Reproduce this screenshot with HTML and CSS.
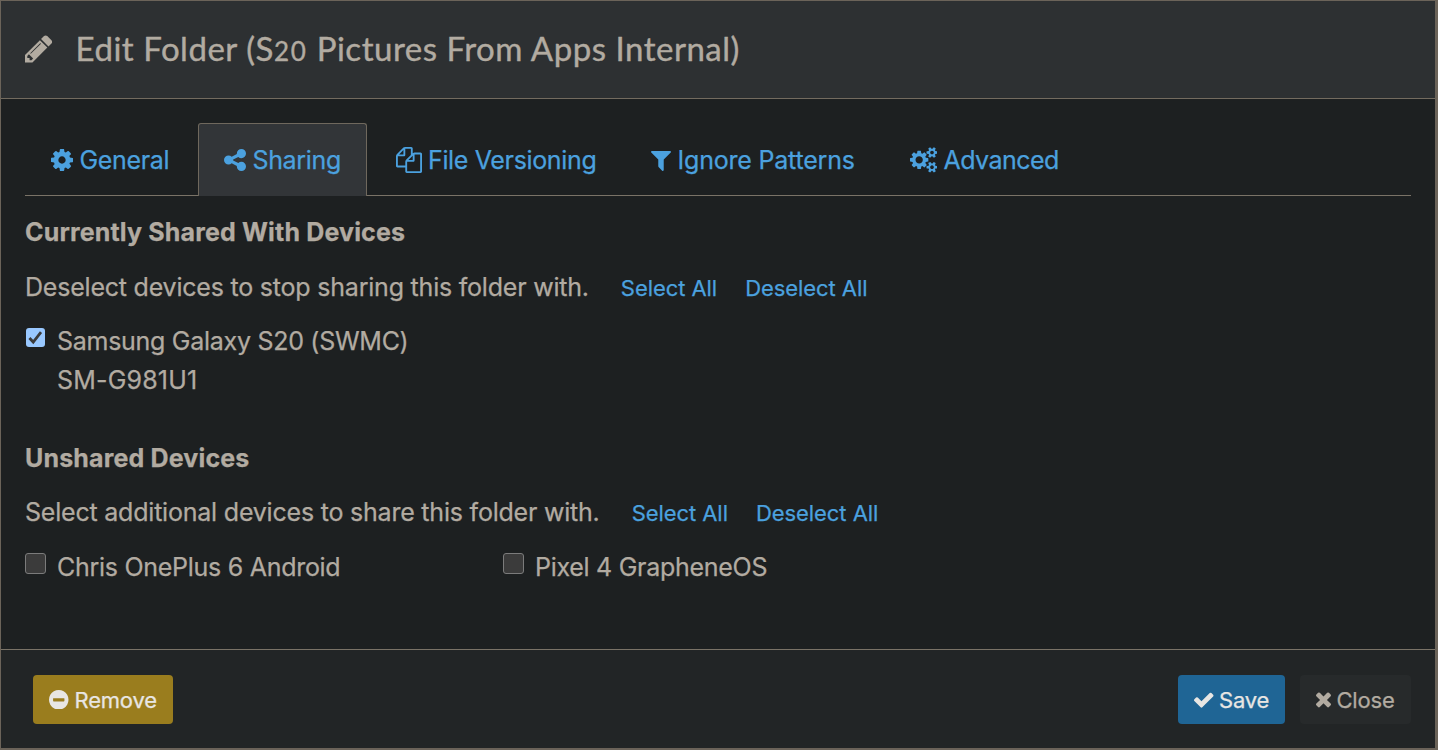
FILE: index.html
```html
<!DOCTYPE html>
<html lang="en">
<head>
<meta charset="utf-8">
<title>Edit Folder</title>
<link rel="stylesheet" href="styles.css">
</head>
<body>
<div class="modal">
  <header class="modal-header">
    <svg class="icon icon-pencil" viewBox="128 128 1536 1536"><path d="M491 1536l91-91-235-235-91 91v107h128v128h107zm523-928q0-22-22-22-10 0-17 7l-542 542q-7 7-7 17 0 22 22 22 10 0 17-7l542-542q7-7 7-17zm-54-192l416 416-832 832h-416v-416zm683 96q0 53-37 90l-166 166-416-416 166-165q36-38 90-38 53 0 91 38l235 234q37 39 37 91z"/></svg>
    <h1 class="title">Edit Folder (S<span class="oldstyle">20</span> Pictures From Apps Internal)</h1>
  </header>

  <main class="modal-body">
    <nav class="tabs">
      <a class="tab tab-general"><svg class="icon icon-square" viewBox="128 128 1536 1536"><path d="M1152 896q0-106-75-181t-181-75-181 75-75 181 75 181 181 75 181-75 75-181zm512-109v222q0 12-8 23t-20 13l-185 28q-19 54-39 91 35 50 107 138 10 12 10 25t-9 23q-27 37-99 108t-94 71q-12 0-26-9l-138-108q-44 23-91 38-16 136-29 186-7 28-36 28h-222q-14 0-24.5-8.5t-11.5-21.5l-28-184q-49-16-90-37l-141 107q-10 9-25 9-14 0-25-11-126-114-165-168-7-10-7-23 0-12 8-23 15-21 51-66.5t54-70.5q-27-50-41-99l-183-27q-13-2-21-12.5t-8-23.5v-222q0-12 8-23t19-13l186-28q14-46 39-92-40-57-107-138-10-12-10-24 0-10 9-23 26-36 98.5-107.5t94.5-71.5q13 0 26 10l138 107q44-23 91-38 16-136 29-186 7-28 36-28h222q14 0 24.5 8.5t11.5 21.5l28 184q49 16 90 37l142-107q9-9 24-9 13 0 25 10 129 119 165 170 7 8 7 22 0 12-8 23-15 21-51 66.5t-54 70.5q26 50 41 98l183 28q13 2 21 12.5t8 23.5z"/></svg><span>General</span></a>
      <a class="tab tab-sharing active"><svg class="icon icon-square" viewBox="128 128 1536 1536"><path d="M1344 1024q133 0 226.500 93.500t93.500 226.500-93.500 226.500-226.500 93.500-226.500-93.500-93.500-226.500q0-12 2-34l-360-180q-92 86-218 86-133 0-226.500-93.500t-93.500-226.500 93.500-226.500 226.500-93.500q126 0 218 86l360-180q-2-22-2-34 0-133 93.500-226.500t226.500-93.500 226.500 93.500 93.500 226.500-93.500 226.500-226.500 93.500q-126 0-218-86l-360 180q2 22 2 34t-2 34l360 180q92-86 218-86z"/></svg><span>Sharing</span></a>
      <a class="tab tab-versioning"><svg class="icon icon-files" viewBox="0 0 1792 1792"><path d="M1696 384q40 0 68 28t28 68v1216q0 40-28 68t-68 28h-960q-40 0-68-28t-28-68v-288h-544q-40 0-68-28t-28-68v-672q0-40 20-88t48-76l408-408q28-28 76-48t88-20h416q40 0 68 28t28 68v328q68-40 128-40h416zm-544 213l-299 299h299v-299zm-640-384l-299 299h299v-299zm196 647l316-316v-416h-384v416q0 40-28 68t-68 28h-416v640h512v-256q0-40 20-88t48-76zm956 804v-1152h-384v416q0 40-28 68t-68 28h-416v640h896z"/></svg><span>File Versioning</span></a>
      <a class="tab tab-ignore"><svg class="icon icon-filter" viewBox="192 128 1408 1536"><path d="M1595 295q17 41-14 70l-493 493v742q0 42-39 59-13 5-25 5-27 0-45-19l-256-256q-19-19-19-45v-486l-493-493q-31-29-14-70 17-39 59-39h1280q42 0 59 39z"/></svg><span>Ignore Patterns</span></a>
      <a class="tab tab-advanced"><svg class="icon icon-cogs" viewBox="-64 0 1920 1792"><path d="M832 896q0-106-75-181t-181-75-181 75-75 181 75 181 181 75 181-75 75-181zm768 512q0-52-38-90t-90-38-90 38-38 90q0 53 37.500 90.500t90.500 37.500 90.500-37.500 37.500-90.500zm0-1024q0-52-38-90t-90-38-90 38-38 90q0 53 37.500 90.500t90.500 37.500 90.500-37.500 37.500-90.500zm-384 421v185q0 10-7 19.500t-16 10.500l-155 24q-11 35-32 76 34 48 90 115 7 11 7 20 0 12-7 19-23 30-82.500 89.500t-78.500 59.500q-11 0-21-7l-115-90q-37 19-77 31-11 108-23 155-7 24-30 24h-186q-11 0-20-7.500t-10-17.500l-23-153q-34-10-75-31l-118 89q-7 7-20 7-11 0-21-8-144-133-144-160 0-9 7-19 10-14 41-53t47-61q-23-44-35-82l-152-24q-10-1-17-9.500t-7-19.500v-185q0-10 7-19.500t16-10.500l155-24q11-35 32-76-34-48-90-115-7-11-7-20 0-12 7-20 22-30 82-89t79-59q11 0 21 7l115 90q34-18 77-32 11-108 23-154 7-24 30-24h186q11 0 20 7.500t10 17.500l23 153q34 10 75 31l118-89q8-7 20-7 11 0 21 8 144 133 144 160 0 8-7 19-12 16-42 54t-45 60q23 48 34 82l152 23q10 2 17 10.500t7 19.500zm640 533v140q0 16-149 31-12 27-30 52 51 113 51 138 0 4-4 7-122 71-124 71-8 0-46-47t-52-68q-20 2-30 2t-30-2q-14 21-52 68t-46 47q-2 0-124-71-4-3-4-7 0-25 51-138-18-25-30-52-149-15-149-31v-140q0-16 149-31 13-29 30-52-51-113-51-138 0-4 4-7 4-2 35-20t59-34 30-16q8 0 46 46.500t52 67.500q20-2 30-2t30 2q51-71 92-112l6-2q4 0 124 70 4 3 4 7 0 25-51 138 17 23 30 52 149 15 149 31zm0-1024v140q0 16-149 31-12 27-30 52 51 113 51 138 0 4-4 7-122 71-124 71-8 0-46-47t-52-68q-20 2-30 2t-30-2q-14 21-52 68t-46 47q-2 0-124-71-4-3-4-7 0-25 51-138-18-25-30-52-149-15-149-31v-140q0-16 149-31 13-29 30-52-51-113-51-138 0-4 4-7 4-2 35-20t59-34 30-16q8 0 46 46.500t52 67.500q20-2 30-2t30 2q51-71 92-112l6-2q4 0 124 70 4 3 4 7 0 25-51 138 17 23 30 52 149 15 149 31z"/></svg><span>Advanced</span></a>
    </nav>

    <section class="group group-shared">
      <h2 class="group-title">Currently Shared With Devices</h2>
      <div class="hint"><span class="hint-text">Deselect devices to stop sharing this folder with.</span><a class="link">Select All</a><a class="link">Deselect All</a></div>
      <div class="devices">
        <label class="device"><span class="box checked"><svg viewBox="0 0 20 20"><path d="M3.600 10.600l4 4.200L15.800 4.400"/></svg></span><span class="name">Samsung Galaxy S20 (SWMC)<br><span class="model">SM-G981U1</span></span></label>
      </div>
    </section>

    <section class="group group-unshared">
      <h2 class="group-title">Unshared Devices</h2>
      <div class="hint"><span class="hint-text">Select additional devices to share this folder with.</span><a class="link">Select All</a><a class="link">Deselect All</a></div>
      <div class="devices">
        <label class="device"><span class="box"></span><span class="name">Chris OnePlus 6 Android</span></label>
        <label class="device"><span class="box"></span><span class="name">Pixel 4 GrapheneOS</span></label>
      </div>
    </section>
  </main>

  <footer class="modal-footer">
    <button class="btn btn-remove"><svg class="icon" viewBox="128 128 1536 1536"><path d="M1344 960v-128q0-26-19-45t-45-19h-768q-26 0-45 19t-19 45v128q0 26 19 45t45 19h768q26 0 45-19t19-45zm320-64q0 209-103 385.500t-279.500 279.500-385.500 103-385.500-103-279.500-279.500-103-385.500 103-385.500 279.500-279.500 385.500-103 385.500 103 279.500 279.500 103 385.500z"/></svg><span>Remove</span></button>
    <button class="btn btn-save"><svg class="icon" viewBox="121 128 1550 1536"><path d="M1671 566q0 40-28 68l-724 724-136 136q-28 28-68 28t-68-28l-136-136-362-362q-28-28-28-68t28-68l136-136q28-28 68-28t68 28l294 295 656-657q28-28 68-28t68 28l136 136q28 28 28 68z"/></svg><span>Save</span></button>
    <button class="btn btn-close"><svg class="icon" viewBox="302 180 1188 1536"><path d="M1490 1322q0 40-28 68l-136 136q-28 28-68 28t-68-28l-294-294-294 294q-28 28-68 28t-68-28l-136-136q-28-28-28-68t28-68l294-294-294-294q-28-28-28-68t28-68l136-136q28-28 68-28t68 28l294 294 294-294q28-28 68-28t68 28l136 136q28 28 28 68t-28 68l-294 294 294 294q28 28 28 68z"/></svg><span>Close</span></button>
  </footer>
</div>
</body>
</html>
```
FILE: styles.css
```css
* { box-sizing: border-box; }

body {
  margin: 0;
  background: #1e2122;
  color: #b2aba1;
  font-family: Inter, "Liberation Sans", sans-serif;
  font-size: 25px;
  -webkit-text-stroke: 0.250px currentColor;
}

.modal {
  display: flex;
  flex-direction: column;
  height: 750px;
  border: 1px solid #6b6359;
  border-right-width: 3px;
  border-bottom-width: 2px;
  background: #1d2021;
}

.icon { display: block; flex: none; fill: currentColor; }

.modal-header {
  display: flex;
  height: 98px;
  padding: 34px 24px 0;
  border-bottom: 1px solid #736b5f;
  background: #2d3032;
}
.icon-pencil { width: 27.500px; height: 27.500px; }
.title {
  margin: -7px 0 0 23px;
  font: 400 33px/40px Lato, sans-serif;
  letter-spacing: 0.520px;
  white-space: nowrap;
  -webkit-text-stroke-width: 0.400px;
}
.oldstyle { font-size: 26px; letter-spacing: 1.800px; }

.modal-body { flex: 1; padding: 24px 24px 0; }

.tabs {
  display: flex;
  gap: 3px;
  height: 73px;
  border-bottom: 1px solid #7a7367;
}
.tab {
  display: flex;
  align-items: center;
  height: 73px;
  padding: 0 0 0 25px;
  border: 1px solid transparent;
  border-bottom: 0;
  border-radius: 3px 3px 0 0;
  color: #4ba1df;
  letter-spacing: -0.350px;
  white-space: nowrap;
}
.tab.active { border-color: #6f685d; background: #323538; }
.icon-square { width: 22px; height: 22px; margin-right: 6.500px; }
.icon-files { width: 26px; height: 26px; margin-right: 6px; }
.icon-filter { width: 20px; height: 22px; margin-right: 6.500px; }
.icon-cogs { width: 27.500px; height: 25.700px; margin-right: 6.500px; }
.tab-general { width: 170px; }
.tab-sharing { width: 169px; }
.tab-versioning { width: 252px; }
.tab-ignore { width: 255.500px; letter-spacing: -0.200px; }
.tab-advanced { letter-spacing: -0.550px; }

.group-title {
  margin: 0;
  font-size: 25px;
  font-weight: 700;
  letter-spacing: 0.160px;
  line-height: 36px;
  white-space: nowrap;
}
.group-shared { height: 226px; padding-top: 18px; }
.group-unshared { padding-top: 18px; }
.hint {
  display: flex;
  align-items: baseline;
  margin-top: 19px;
  line-height: 36px;
  white-space: nowrap;
}
.group-unshared .hint { margin-top: 18px; }
.hint-text { margin-right: 32px; letter-spacing: -0.210px; }
.link { margin-right: 28px; color: #4ba1df; font-size: 22px; letter-spacing: -0.060px; }

.devices { display: flex; margin-top: 16px; }
.group-unshared .devices { margin-top: 17px; }
.device { display: flex; width: 478px; line-height: 39px; white-space: nowrap; }
.name { letter-spacing: -0.280px; }
.model { letter-spacing: 0.180px; }
.box {
  flex: none;
  width: 21px;
  height: 21px;
  margin: 5px 11px 0 0;
  border: 1px solid #7b7b7b;
  border-radius: 3px;
  background: #3b3b3b;
}
.box.checked {
  width: 19px;
  height: 19px;
  margin: 6px 12px 0 1px;
  border: 0;
  background: #99c8ff;
}
.box svg { display: block; width: 19px; height: 19px; fill: none; stroke: #3b3b3b; stroke-width: 2.900; }

.modal-footer {
  display: flex;
  height: 99px;
  padding: 25px 24px 0 32px;
  border-top: 1px solid #7a7367;
  background: #222526;
}
.btn {
  display: flex;
  align-items: center;
  height: 49px;
  padding: 0 0 0 16px;
  border: 0;
  border-radius: 4px;
  color: #e8e6e3;
  font: 22px Inter, "Liberation Sans", sans-serif;
  letter-spacing: -0.200px;
  white-space: nowrap;
}
.btn .icon { width: 19.500px; height: 19.500px; margin-right: 6px; }
.btn-remove { width: 140px; margin-right: auto; background: #9a7d1e; }
.btn-save { width: 107px; margin-right: 15px; background: #1f6595; }
.btn-save .icon { margin-right: 5.500px; }
.btn-close { width: 111px; background: #272a2b; color: #b2aba1; }
.btn-close .icon { width: 15px; margin-right: 5.500px; }
```
